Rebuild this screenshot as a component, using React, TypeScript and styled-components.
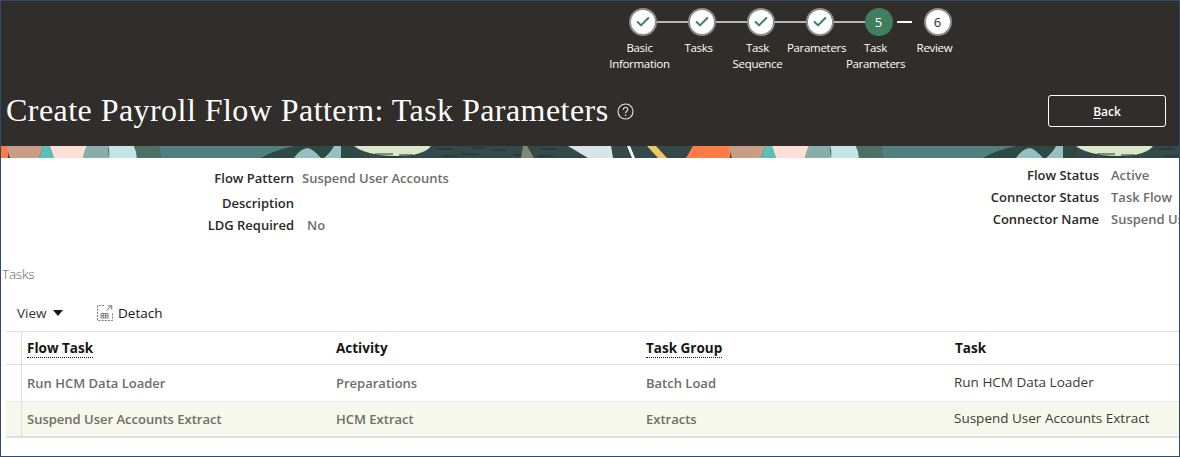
import React from 'react';
import styled, { createGlobalStyle } from 'styled-components';
import { Check } from 'lucide-react';

const GlobalStyle = createGlobalStyle`
  html, body {
    margin: 0;
    padding: 0;
    background: #fff;
    overflow: hidden;
  }
`;

const Frame = styled.div`
  box-sizing: border-box;
  width: 1180px;
  height: 457px;
  border: 1px solid #2f4a6c;
  overflow: hidden;
  font-family: "Open Sans", "Noto Sans", sans-serif;
  color: #161513;
`;

const Header = styled.header`
  background: #312d2a;
  height: 145px;
  padding-top: 7px;
  box-sizing: border-box;
`;

const Train = styled.ol`
  display: flex;
  margin: 0 0 0 612px;
  padding: 0;
  list-style: none;
`;

const Step = styled.li`
  width: 59px;
  display: flex;
  flex-direction: column;
  align-items: center;
  position: relative;
`;

const Connector = styled.span<{ $short?: boolean }>`
  position: absolute;
  top: 13px;
  left: ${props => (props.$short ? '48px' : '29px')};
  width: ${props => (props.$short ? '15px' : '59px')};
  height: 2px;
  background: ${props => (props.$short ? '#fff' : '#b4b6b8')};
`;

const Circle = styled.span<{ $current?: boolean }>`
  box-sizing: border-box;
  position: relative;
  width: 28px;
  height: 28px;
  border-radius: 50%;
  border: 2px solid ${props => (props.$current ? '#3f7f5d' : '#8c8c8c')};
  background: ${props => (props.$current ? '#3f7f5d' : '#fff')};
  color: ${props => (props.$current ? '#fff' : '#312d2a')};
  display: flex;
  align-items: center;
  justify-content: center;
  font-size: 13px;
`;

const StepLabel = styled.span`
  margin-top: 4px;
  width: 64px;
  margin-left: -6px;
  text-align: center;
  color: #fff;
  font-size: 11.5px;
  line-height: 16px;
  letter-spacing: -0.3px;
`;

const TitleRow = styled.div`
  display: flex;
  align-items: center;
  justify-content: space-between;
  margin-top: 23px;
  padding: 0 13px 0 5px;
`;

const TitleGroup = styled.div`
  display: flex;
  align-items: center;
  gap: 8px;
`;

const Title = styled.h1`
  margin: 0;
  padding-bottom: 2px;
  color: #fff;
  font-family: "Liberation Serif", serif;
  font-weight: 400;
  font-size: 32px;
  line-height: 30px;
  letter-spacing: 0.45px;
`;

const BackButton = styled.button`
  box-sizing: border-box;
  width: 118px;
  height: 32px;
  background: transparent;
  border: 1px solid #fff;
  border-radius: 3px;
  color: #fff;
  font-family: inherit;
  font-size: 12px;
  font-weight: 600;
  padding: 0;

  u {
    text-underline-offset: 2px;
  }
`;

const Banner = styled.svg`
  display: block;
  width: 100%;
  height: 12px;
`;

const Details = styled.section`
  display: flex;
  justify-content: space-between;
  height: 107px;
  font-size: 13px;
`;

const FieldList = styled.dl<{ $columns: string; $gap: number; $top: number; $rows: string }>`
  display: grid;
  grid-template-columns: ${props => props.$columns};
  grid-template-rows: ${props => props.$rows};
  column-gap: ${props => props.$gap}px;
  align-content: start;
  margin: ${props => props.$top}px 0 0;
  line-height: 18px;
`;

const FieldLabel = styled.dt`
  text-align: right;
  font-weight: 600;
  color: #2b2826;
  white-space: nowrap;
`;

const FieldValue = styled.dd<{ $indent?: number }>`
  margin: 0;
  padding-left: ${props => props.$indent ?? 0}px;
  color: #6f6c6a;
  font-weight: 600;
  white-space: nowrap;
  min-height: 18px;
`;

const SectionTitle = styled.h2`
  margin: 0 0 0 1px;
  font-weight: 300;
  font-size: 13.5px;
  line-height: 18px;
  color: #5f5c5a;
  letter-spacing: -0.2px;
`;

const Toolbar = styled.div`
  display: flex;
  align-items: center;
  height: 22px;
  margin: 19px 0 7px 16px;
  font-size: 13.5px;
`;

const ViewMenu = styled.span`
  display: flex;
  align-items: center;
  gap: 6px;
  width: 80px;
  color: #333;
`;

const Caret = styled.span`
  width: 0;
  height: 0;
  border-left: 5px solid transparent;
  border-right: 5px solid transparent;
  border-top: 6px solid #161513;
`;

const DetachButton = styled.span`
  display: flex;
  align-items: center;
  gap: 5px;
  font-weight: 400;
  color: #161513;
`;

const Table = styled.div`
  margin-left: 5px;
  border-top: 1px solid #d9e0e8;
`;

const Row = styled.div<{ $selected?: boolean; $head?: boolean }>`
  display: grid;
  grid-template-columns: 16px 309px 310px 309px 1fr;
  height: ${props => (props.$head ? '32px' : props.$selected ? '34px' : '36px')};
  align-items: center;
  background: ${props => (props.$selected ? '#f7f8ec' : '#fff')};
  border-bottom: ${props =>
    props.$head ? '1px solid #d9e0e8' : props.$selected ? '2px solid #d9e0e8' : '1px solid #e6e9ea'};
`;

const Gutter = styled.span`
  align-self: stretch;
  border-right: 1px solid #d9e0e8;
`;

const HeadCell = styled.span`
  padding-left: 5px;
  font-size: 13.5px;
  font-weight: 700;
  color: #161513;
`;

const HeadLabel = styled.span<{ $dotted?: boolean }>`
  border-bottom: ${props => (props.$dotted ? '1px dotted #161513' : 'none')};
`;

const Cell = styled.span<{ $plain?: boolean }>`
  padding-left: ${props => (props.$plain ? '4px' : '5px')};
  padding-bottom: ${props => (props.$plain ? '2px' : '0')};
  font-size: ${props => (props.$plain ? '13.5px' : '13px')};
  font-weight: ${props => (props.$plain ? 400 : 600)};
  color: ${props => (props.$plain ? '#3c3a38' : '#6f6c6a')};
  white-space: nowrap;
`;

const steps = [
  { label: 'Basic Information', done: true },
  { label: 'Tasks', done: true },
  { label: 'Task Sequence', done: true },
  { label: 'Parameters', done: true },
  { label: 'Task Parameters', done: false, num: 5, current: true },
  { label: 'Review', done: false, num: 6 },
];

const rows = [
  ['Run HCM Data Loader', 'Preparations', 'Batch Load', 'Run HCM Data Loader'],
  ['Suspend User Accounts Extract', 'HCM Extract', 'Extracts', 'Suspend User Accounts Extract'],
];

const BannerArt = () => (
  <Banner>
    <defs>
      <pattern id="banner" width="722" height="12" patternUnits="userSpaceOnUse" x="0">
        <rect width="722" height="12" fill="#34494a" />
        <polygon points="0,0 7,0 7,12 0,12" fill="#fd7c45" />
        <polygon points="5,0 42,0 38,12 9,12" fill="#c99d84" />
        <polygon points="42,0 49,0 53,12 38,12" fill="#5bbfba" />
        <polygon points="49,0 86,0 82,12 53,12" fill="#fde0d5" />
        <path d="M86 0 H107 L108 12 H82 Q83 4 86 0Z" fill="#88aeac" />
        <path d="M107 0 H133 Q136 6 136 12 H108 Q109 4 107 0Z" fill="#c5e4e5" />
        <path d="M133 0 H158 L160 12 H136 Q136 6 133 0Z" fill="#4f6f64" />
        <path d="M158 0 H294 Q274 4 260 12 H160 Z" fill="#507f7d" />
        <path d="M260 12 Q274 4 294 0 H353 V12Z" fill="#2e4842" />
        <path d="M293 12 Q300 2 307 2 Q312 3 320 12Z" fill="#93bfc0" />
        <path d="M323 12 Q330 6 333 0 H340 V12Z" fill="#99c0c0" />
        <path d="M353 0 H430 Q426 6 412 9 Q396 11 378 9 Q360 6 353 0Z" fill="#d9e8c8" />
        <path d="M374 8 H392 M398 9 H412 M380 11 H402 M436 3 H452 M460 8 H478 M490 4 H505 M512 9 H530 M440 10 H456 M540 3 H556 M470 2 H484 M536 10 H552" stroke="#1f302f" strokeWidth="1" />
        <polygon points="522,0 526,0 533,12 520,12" fill="#7c8a74" />
        <polygon points="567,0 610,0 612,12 587,12" fill="#d7e5e7" />
        <polygon points="626,0 629,0 634,12 631,12" fill="#ffffff" />
        <polygon points="646,0 655,0 666,12 657,12" fill="#f2c564" />
        <polygon points="692,0 722,0 722,12 685,12" fill="#fd7c45" />
      </pattern>
    </defs>
    <rect width="100%" height="12" fill="url(#banner)" />
  </Banner>
);

const DetachIcon = () => (
  <svg width="16" height="16" viewBox="0 0 16 16" fill="none">
    <path d="M7 .5H.5v15h15V8" stroke="#777" strokeDasharray="2 1.2" />
    <path d="M9.5 5.5 14.5 .9M11 .8h3.7v3.6" stroke="#777" />
    <path d="M4 8.5h7v4.5H4zM4 10.7h7M6.3 8.5V13M8.7 8.5V13" stroke="#666" strokeWidth=".8" />
  </svg>
);

export default function App() {
  return (
    <Frame>
      <GlobalStyle />
      <Header>
        <Train>
          {steps.map((step, i) => (
            <Step key={step.label}>
              {i < steps.length - 2 && <Connector />}
              {i === steps.length - 2 && <Connector $short />}
              <Circle $current={step.current}>
                {step.done ? <Check size={16} strokeWidth={3} color="#3f7f5d" /> : step.num}
              </Circle>
              <StepLabel>{step.label}</StepLabel>
            </Step>
          ))}
        </Train>
        <TitleRow>
          <TitleGroup>
            <Title>Create Payroll Flow Pattern: Task Parameters</Title>
            <svg width="17" height="17" viewBox="0 0 17 17" fill="none">
              <circle cx="8.5" cy="8.5" r="7.5" stroke="#e8e8e8" strokeWidth="1.1" />
              <path d="M6.3 6.7c0-3 4.5-3 4.5-.2 0 1.8-2.3 1.7-2.3 3.7" stroke="#e8e8e8" strokeWidth="1.1" />
              <circle cx="8.5" cy="12.3" r=".8" fill="#e8e8e8" />
            </svg>
          </TitleGroup>
          <BackButton>
            <u>B</u>ack
          </BackButton>
        </TitleRow>
      </Header>
      <BannerArt />
      <Details>
        <FieldList $columns="293px auto" $gap={8} $top={11} $rows="25px 22px 18px">
          <FieldLabel>Flow Pattern</FieldLabel>
          <FieldValue>Suspend User Accounts</FieldValue>
          <FieldLabel>Description</FieldLabel>
          <FieldValue />
          <FieldLabel>LDG Required</FieldLabel>
          <FieldValue $indent={5}>No</FieldValue>
        </FieldList>
        <FieldList $columns="130px 68px" $gap={12} $top={8} $rows="22px 22px 18px">
          <FieldLabel>Flow Status</FieldLabel>
          <FieldValue>Active</FieldValue>
          <FieldLabel>Connector Status</FieldLabel>
          <FieldValue>Task Flow</FieldValue>
          <FieldLabel>Connector Name</FieldLabel>
          <FieldValue>Suspend User Accounts</FieldValue>
        </FieldList>
      </Details>
      <SectionTitle>Tasks</SectionTitle>
      <Toolbar>
        <ViewMenu>
          View <Caret />
        </ViewMenu>
        <DetachButton>
          <DetachIcon /> Detach
        </DetachButton>
      </Toolbar>
      <Table>
        <Row $head>
          <Gutter />
          <HeadCell><HeadLabel $dotted>Flow Task</HeadLabel></HeadCell>
          <HeadCell><HeadLabel>Activity</HeadLabel></HeadCell>
          <HeadCell><HeadLabel $dotted>Task Group</HeadLabel></HeadCell>
          <HeadCell><HeadLabel>Task</HeadLabel></HeadCell>
        </Row>
        {rows.map((row, i) => (
          <Row key={row[0]} $selected={i === 1}>
            <Gutter />
            <Cell>{row[0]}</Cell>
            <Cell>{row[1]}</Cell>
            <Cell>{row[2]}</Cell>
            <Cell $plain>{row[3]}</Cell>
          </Row>
        ))}
      </Table>
    </Frame>
  );
}
